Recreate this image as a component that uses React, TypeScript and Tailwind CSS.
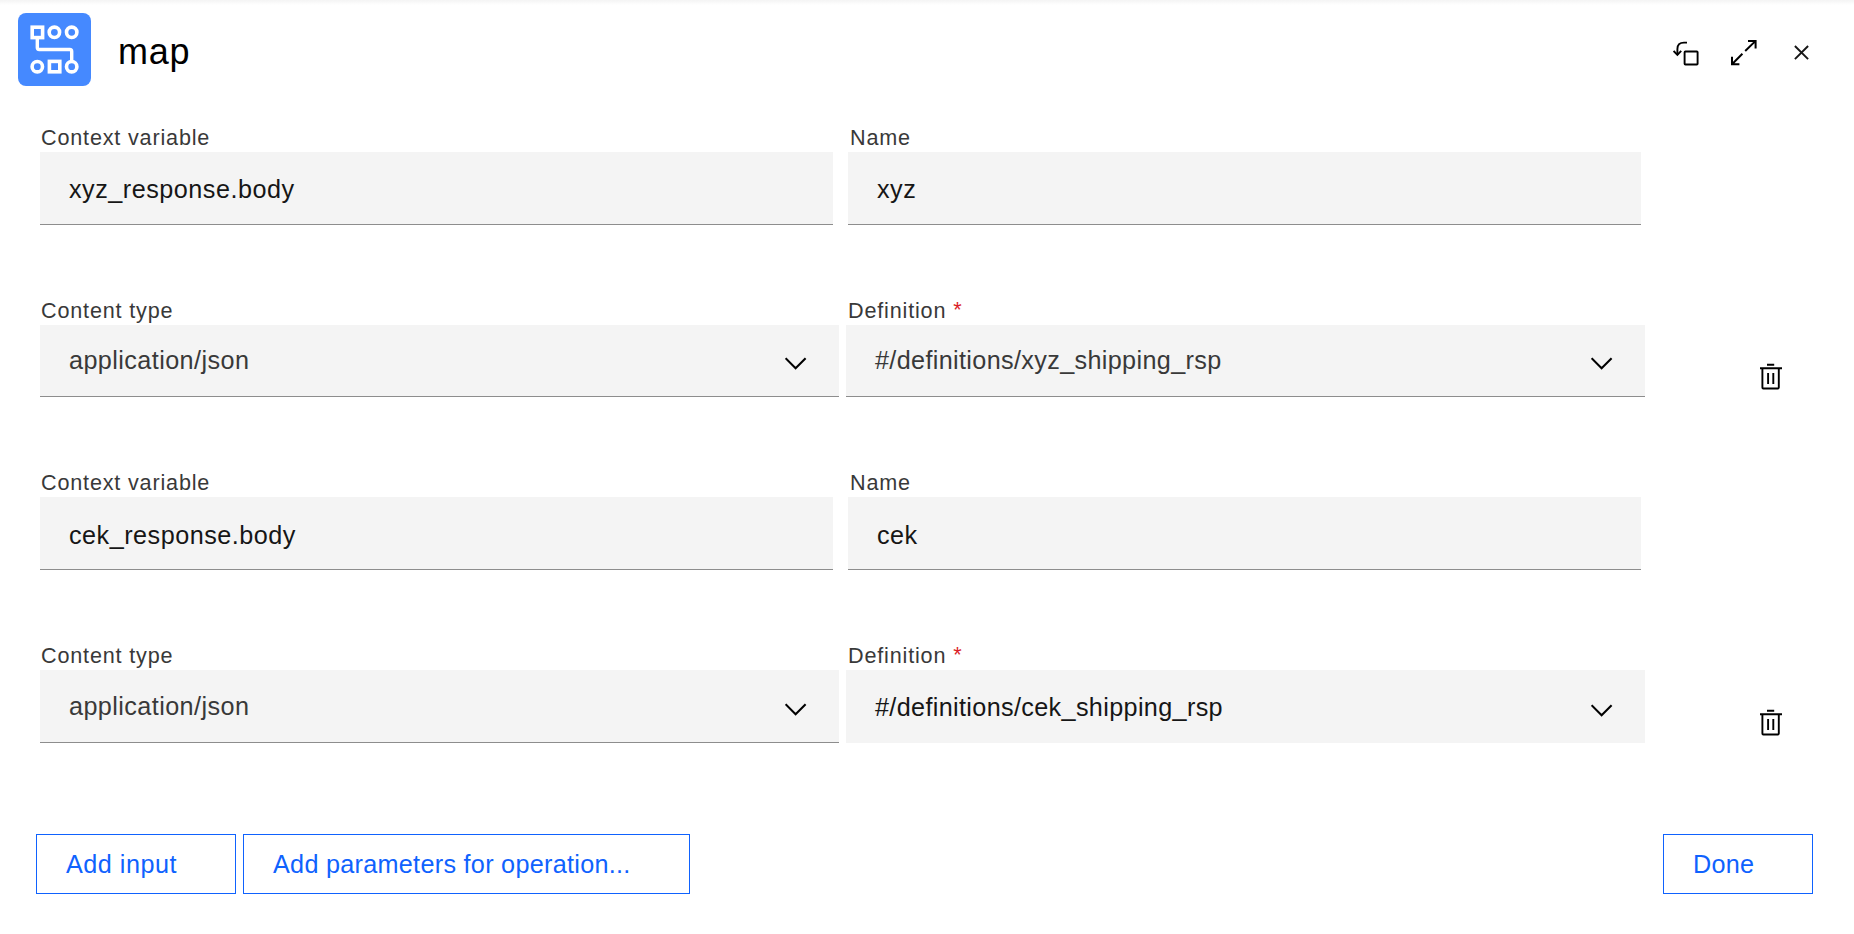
import React from "react";

function MapLogo() {
  return (
    <svg className="block h-[73px] w-[73px]" viewBox="0 0 73 73" fill="none" stroke="#fff" strokeWidth="3.6">
      <rect width="73" height="73" rx="8" fill="#4589ff" stroke="none" />
      <rect x="14.2" y="14.2" width="10.4" height="10.4" />
      <circle cx="36.4" cy="19.3" r="5.2" />
      <circle cx="53.7" cy="19.3" r="5.2" />
      <circle cx="19.3" cy="53.7" r="5.2" />
      <rect x="31.4" y="48.4" width="10.4" height="10.4" />
      <circle cx="53.7" cy="53.7" r="5.2" />
      <path d="M19.3 25v9.5q0 2 2 2H51.7q2 0 2 2V48.5" strokeWidth="3.4" />
    </svg>
  );
}

function RestoreIcon() {
  return (
    <svg className="block h-[26px] w-[28px]" viewBox="0 0 28 26" fill="none" stroke="#000" strokeWidth="1.9">
      <path d="M14 2.6h-3Q4.4 2.6 4.4 9V15" />
      <path d="M.6 10.9 4.4 14.9 8.2 10.9" />
      <rect x="11.6" y="11.5" width="13" height="13" rx="0.8" />
    </svg>
  );
}

function ExpandIcon() {
  return (
    <svg className="block h-[26px] w-[28px]" viewBox="0 0 28 26" fill="none" stroke="#000" strokeWidth="2">
      <path d="M14.2 11 24.6 .9M17 1h7.6v7.5" />
      <path d="M11.4 13.8 1 24.2M1 16.8v7.5H8.4" />
    </svg>
  );
}

function CloseIcon() {
  return (
    <svg className="block h-[16px] w-[16px]" viewBox="0 0 16 16" fill="none" stroke="#161616" strokeWidth="1.9">
      <path d="M.9 1 14.1 14.2M14.1 1 .9 14.2" />
    </svg>
  );
}

function Chevron() {
  return (
    <svg className="block h-[14px] w-[22px]" viewBox="0 0 22 14" fill="none" stroke="#000" strokeWidth="2.1">
      <path d="M.6 1.2 10.6 11.2 20.6 1.2" />
    </svg>
  );
}

function TrashIcon() {
  return (
    <svg className="block h-[28px] w-[24px]" viewBox="0 0 24 28" fill="none" stroke="#000" strokeWidth="1.9">
      <path d="M8 1.7h7.2M1 5.3h22M9.1 10v11M14.3 10v11" />
      <path d="M3.4 5.3V24.6q0 .9.9.9H18.9q.9 0 .9-.9V5.3" />
    </svg>
  );
}

function Label({ text, required }: { text: string; required?: boolean }) {
  return (
    <span className="block h-[28px] whitespace-nowrap text-[21.6px] leading-[28px] tracking-[0.82px] text-[#393939]">
      {text}
      {required && <span className="relative -top-px ml-[7px] text-[#da1e28]">*</span>}
    </span>
  );
}

function TextField({ label, value, labelPad, valuePad }: { label: string; value: string; labelPad: string; valuePad: string }) {
  return (
    <div className="w-[793px]">
      <div className={labelPad}><Label text={label} /></div>
      <div className={`flex h-[73px] items-center border-b border-[#8d8d8d] bg-[#f4f4f4] pl-[29px] text-[25.2px] tracking-[0.5px] text-[#161616] ${valuePad}`}>
        {value}
      </div>
    </div>
  );
}

type SelectProps = {
  label: string;
  value: string;
  tracking: string;
  labelPad: string;
  required?: boolean;
  tall?: boolean;
  active?: boolean;
};

function SelectField({ label, value, tracking, labelPad, required, tall, active }: SelectProps) {
  return (
    <div className="w-[799px]">
      <div className={labelPad}><Label text={label} required={required} /></div>
      <div
        className={`flex items-center justify-between border-b bg-[#f4f4f4] pl-[29px] pr-[32.5px] text-[25.2px] ${tracking} ${tall ? "h-[73px]" : "h-[72px]"} ${active ? "border-[#f4f4f4] pt-[4px] text-[#161616]" : "border-[#8d8d8d] text-[#393939]"} ${tall && !active ? "pt-[2px]" : ""}`}
      >
        <span>{value}</span>
        <span className={tall ? "pt-[5px]" : "pt-[7px]"}><Chevron /></span>
      </div>
    </div>
  );
}

function InputGroup({ name, last }: { name: string; last?: boolean }) {
  const valuePad = last ? "pt-[6px]" : "pt-[4px]";
  return (
    <section className="h-[345px]">
      <div className="flex h-[173px] gap-[15px]">
        <TextField label="Context variable" value={`${name}_response.body`} labelPad="pl-[1px]" valuePad={valuePad} />
        <TextField label="Name" value={name} labelPad="pl-[2px]" valuePad={valuePad} />
      </div>
      <div className="flex gap-[7px]">
        <SelectField label="Content type" value="application/json" tracking="tracking-[0.42px]" labelPad="pl-[1px]" tall={last} />
        <SelectField
          label="Definition"
          value={`#/definitions/${name}_shipping_rsp`}
          tracking="tracking-[0.35px]"
          labelPad="pl-[2px]"
          required
          tall={last}
          active={last}
        />
        <button aria-label="Delete" className={`ml-[107px] h-[28px] w-[24px] ${last ? "mt-[67px]" : "mt-[66px]"}`}>
          <TrashIcon />
        </button>
      </div>
    </section>
  );
}

function OutlineButton({ children, className }: { children: string; className: string }) {
  return (
    <button className={`h-[60px] border border-[#0f62fe] bg-white pl-[29px] pt-[2px] text-left text-[25.2px] text-[#0f62fe] ${className}`}>
      {children}
    </button>
  );
}

export default function App() {
  return (
    <main className="flex h-[934px] w-[1854px] flex-col overflow-hidden bg-white font-['Liberation_Sans',Arial,sans-serif]">
      <div className="h-[5px] bg-gradient-to-b from-[#f4f4f4] to-white" />
      <header className="flex h-[119px] items-start pl-[18px] pt-[8px]">
        <MapLogo />
        <h1 className="ml-[27px] mt-[17px] text-[36px] leading-[44px] tracking-[0.8px] text-black">map</h1>
        <div className="ml-auto flex items-center pr-[44px] pt-[27px]">
          <RestoreIcon />
          <span className="ml-[30px]"><ExpandIcon /></span>
          <span className="ml-[35px]"><CloseIcon /></span>
        </div>
      </header>
      <div className="pl-[40px]">
        <InputGroup name="xyz" />
        <InputGroup name="cek" last />
      </div>
      <footer className="mt-[20px] flex pl-[36px] pr-[41px]">
        <OutlineButton className="w-[200px] tracking-[0.5px]">Add input</OutlineButton>
        <span className="w-[7px]" />
        <OutlineButton className="w-[447px] tracking-[0.29px]">Add parameters for operation...</OutlineButton>
        <span className="flex-1" />
        <OutlineButton className="w-[150px] tracking-[0.29px]">Done</OutlineButton>
      </footer>
    </main>
  );
}
